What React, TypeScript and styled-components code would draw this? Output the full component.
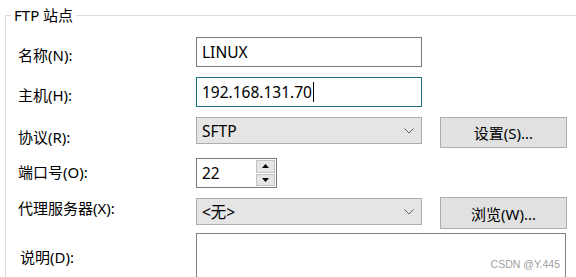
import * as React from "react";
import styled, { createGlobalStyle } from "styled-components";

const GlobalStyle = createGlobalStyle`
  html, body {
    margin: 0;
    padding: 0;
    background: #ffffff;
    overflow: hidden;
  }
  body {
    font-family: "Noto Sans", "Noto Sans CJK SC", sans-serif;
    font-size: 15px;
    color: #000000;
  }
`;

const Page = styled.div`
  width: 576px;
  height: 277px;
  overflow: hidden;
`;

const Group = styled.fieldset`
  margin: 5px 0 0 5px;
  width: 640px;
  border: 1px solid #dcdcdc;
  padding: 12px 0 0 12px;
  min-width: 0;
`;

const Legend = styled.legend`
  margin-left: -7px;
  padding: 0 3px;
  font-size: 15px;
  line-height: 20px;
`;

const Form = styled.div`
  display: grid;
  grid-template-columns: 160px 226px 127px;
  grid-template-rows: 31px 30px 33px 30px 32px 60px;
  column-gap: 18px;
  row-gap: 9px;
  align-items: start;
`;

const Label = styled.label<{ $dy: number; $dx?: number }>`
  font-size: 15px;
  line-height: 20px;
  white-space: nowrap;
  margin-top: ${(p) => p.$dy}px;
  padding-left: ${(p) => p.$dx ?? 0}px;
`;

const TextBox = styled.div<{ $focused?: boolean }>`
  box-sizing: border-box;
  height: 30px;
  border: 1px solid ${(p) => (p.$focused ? "#1d6f86" : "#7a7a7a")};
  padding: 0 5px;
  display: flex;
  align-items: center;
  font-size: 15.5px;
  background: #ffffff;
`;

const Caret = styled.span`
  display: inline-block;
  width: 1px;
  height: 20px;
  background: #000000;
  margin-left: 1px;
`;

const Select = styled.div`
  box-sizing: border-box;
  height: 27px;
  margin-top: 1px;
  border: 1px solid #adadad;
  background: #e5e5e5;
  padding: 0 7px 0 5px;
  display: flex;
  align-items: center;
  justify-content: space-between;
  font-size: 15.5px;
`;

const Button = styled.button<{ $shift?: number }>`
  box-sizing: border-box;
  height: ${(p) => 32 - (p.$shift ?? 0)}px;
  margin-top: ${(p) => p.$shift ?? 0}px;
  border: 1px solid #adadad;
  background: #e1e1e1;
  font-family: inherit;
  font-size: 15px;
  color: #000000;
  padding: 0;
`;

const PortBox = styled.div`
  display: flex;
  width: 81px;
  height: 30px;
  box-sizing: border-box;
  border: 1px solid #7a7a7a;
  background: #ffffff;
`;

const PortValue = styled.div`
  flex: 1;
  display: flex;
  align-items: center;
  padding-left: 5px;
  font-size: 15.5px;
`;

const Spinner = styled.div`
  display: flex;
  flex-direction: column;
  width: 19px;
  padding: 1px;
  gap: 1px;
`;

const SpinButton = styled.div`
  flex: 1;
  background: #e5e5e5;
  border: 1px solid #c2c2c2;
  display: flex;
  align-items: center;
  justify-content: center;
`;

const Notes = styled.div`
  grid-column: 2 / span 2;
  position: relative;
  box-sizing: border-box;
  margin-top: -5px;
  width: 370px;
  height: 80px;
  border: 1px solid #828282;
  background: #ffffff;
`;

const Watermark = styled.span`
  position: absolute;
  right: 5px;
  top: 24px;
  font-family: "Liberation Sans", sans-serif;
  font-size: 10.5px;
  color: #a0a0a0;
`;

const Chevron: React.FC = () => (
  <svg width="10" height="6" viewBox="0 0 10 6">
    <path d="M0.5 0.5 L5 5 L9.5 0.5" fill="none" stroke="#606060" strokeWidth="1" />
  </svg>
);

const Arrow: React.FC<{ up?: boolean }> = ({ up }) => (
  <svg width="7" height="4" viewBox="0 0 7 4">
    <path d={up ? "M0 4 L3.5 0 L7 4 Z" : "M0 0 L3.5 4 L7 0 Z"} fill="#000000" />
  </svg>
);

export default function App() {
  return (
    <Page>
      <GlobalStyle />
      <Group>
        <Legend>FTP 站点</Legend>
        <Form>
          <Label $dy={8}>名称(N):</Label>
          <TextBox>LINUX</TextBox>
          <span />

          <Label $dy={8}>主机(H):</Label>
          <TextBox $focused>
            192.168.131.70
            <Caret />
          </TextBox>
          <span />

          <Label $dy={11}>协议(R):</Label>
          <Select>
            SFTP
            <Chevron />
          </Select>
          <Button $shift={1}>设置(S)...</Button>

          <Label $dy={4}>端口号(O):</Label>
          <PortBox>
            <PortValue>22</PortValue>
            <Spinner>
              <SpinButton>
                <Arrow up />
              </SpinButton>
              <SpinButton>
                <Arrow />
              </SpinButton>
            </Spinner>
          </PortBox>
          <span />

          <Label $dy={1}>代理服务器(X):</Label>
          <Select>
            &lt;无&gt;
            <Chevron />
          </Select>
          <Button>浏览(W)...</Button>

          <Label $dy={9} $dx={2}>说明(D):</Label>
          <Notes>
            <Watermark>CSDN @Y.445</Watermark>
          </Notes>
        </Form>
      </Group>
    </Page>
  );
}
